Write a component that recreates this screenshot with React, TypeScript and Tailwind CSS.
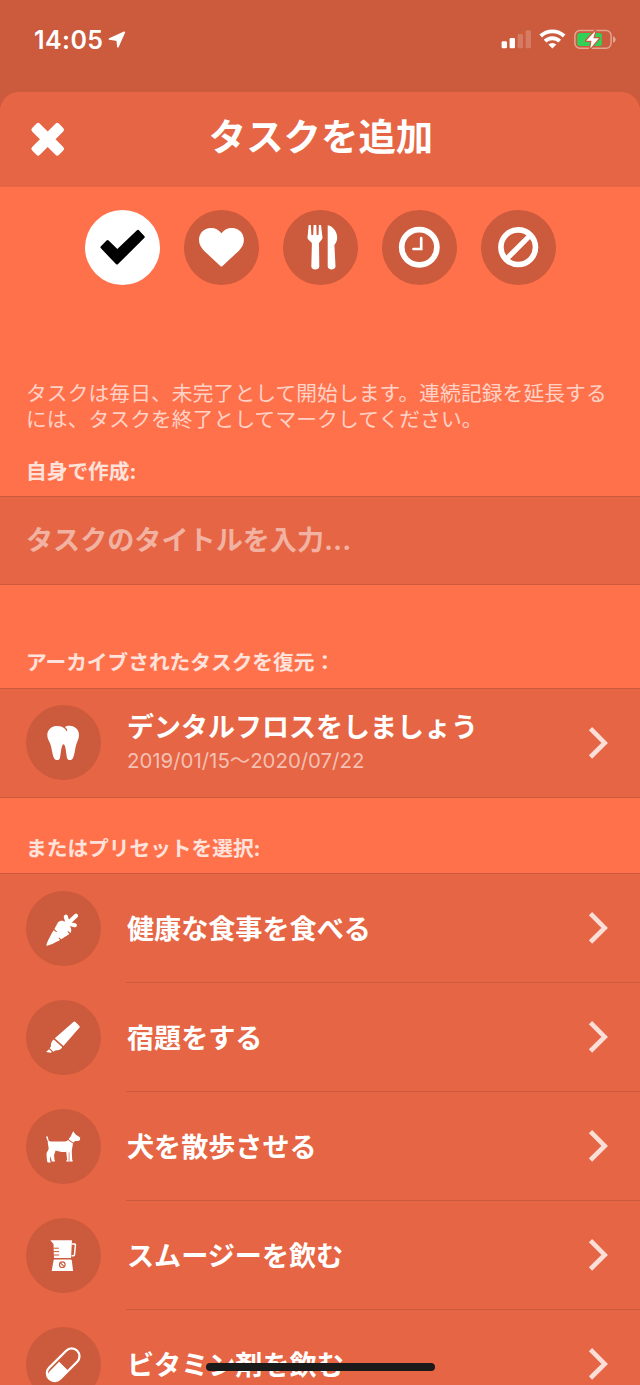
import React from 'react';

type IconProps = {
  children: React.ReactNode;
};

type Preset = {
  title: string;
  icon: React.ReactNode;
};

const Glyph = ({ children }: IconProps) => (
  <svg viewBox="0 0 75 75" className="h-[75px] w-[75px]" fill="currentColor">
    {children}
  </svg>
);

const CheckIcon = () => (
  <Glyph>
    <path
      d="M17 37.3 22.6 31.6 32.3 41 53 21.4 58.2 27 32 53Z"
      stroke="currentColor"
      strokeWidth="3"
      strokeLinejoin="round"
    />
  </Glyph>
);

const HeartIcon = () => (
  <Glyph>
    <path d="M37.4 23.2C34.5 19.6 31 17.7 26.8 17.9 19.8 18.2 15 23.3 15 29.8c0 4.600 1.900 7.800 5.200 11.100L36.300 55.900c.7.700 1.500.7 2.200 0l16.200-15c3.300-3.300 5.200-6.500 5.200-11.100 0-6.500-4.800-11.600-11.800-11.900-4.200-.2-7.800 1.700-10.700 5.300Z" />
  </Glyph>
);

const MealIcon = () => (
  <Glyph>
    <path d="M25.700 15h2.100l.6 10h1.800l.4-10h2.700l.4 10h1.800l.4-10h2.100l1.500 12.600c.2 2.300-3.300 4.100-3.500 5.900l.3 22.700c0 4.300-8 4.300-8 0l.6-22.700c-.4-1.800-4.700-3.600-4.400-5.900Z" />
    <path d="M44.700 15.200c5.100.6 9.500 6.600 9.500 12.400 0 3-.9 5-2.800 7.400l1.100 21.200c.1 4.300-7.900 4.300-7.800 0Z" />
  </Glyph>
);

const ClockIcon = () => (
  <Glyph>
    <circle cx="37.300" cy="37.200" r="17.600" fill="none" stroke="currentColor" strokeWidth="5.700" />
    <path d="M39.200 28.200V39H31.500" fill="none" stroke="currentColor" strokeWidth="2.700" strokeLinecap="round" />
  </Glyph>
);

const BanIcon = () => (
  <Glyph>
    <circle cx="37.200" cy="37.200" r="17.300" fill="none" stroke="currentColor" strokeWidth="5.600" />
    <path d="M26 48.500 48.500 26" stroke="currentColor" strokeWidth="5.300" />
  </Glyph>
);

const ToothIcon = () => (
  <Glyph>
    <path d="M30 21C33 20.600 36 21.400 38.300 23.200 39.300 24 39.900 25 40.300 26.200L41.200 25.800C41.200 24 40.200 22.700 38.700 22 40.500 20.900 42.800 20.600 45 20.900 50 21.500 53 25.300 53 30.200 53 34.500 50.600 37 49.700 41.500 48.900 45.500 48.300 51 46.600 53.700 45.400 55.500 41.900 55.600 41.100 53.200 40.100 49.800 39.900 39.300 37.500 39.300S34.900 49.800 33.900 53.200C33.100 55.600 29.600 55.500 28.300 53.700 26.600 51 26 45.500 25.100 41.500 24.100 37 21.300 34.500 21.300 30 21.300 25.200 24.900 21.500 30 21Z" />
  </Glyph>
);

const CarrotIcon = () => (
  <Glyph>
    <path d="M20.400 54.500C19.800 53.800 24.600 43.800 27.600 39.200L30.600 41.300 31.100 40.700 28.400 38 32 31.300C33.900 29 37.600 29.200 39.700 31.100L43.300 34.500C45.500 36.700 45.800 39.600 44.600 42L42 40.100 41.500 40.700 43.400 43.100 35.200 48.300 33.100 46.500 32.500 47.100 34 49.100C29.500 51.700 21.200 55.500 20.400 54.500Z" />
    <path
      d="m41.800 32.300-2-6.600M42 32.300l8-7.600M42.200 32.500l6.600 1.700"
      stroke="currentColor"
      strokeWidth="4.200"
      strokeLinecap="round"
    />
  </Glyph>
);

const MarkerIcon = () => (
  <Glyph>
    <path d="M28.800 38.200 47.700 21.800q.8-.6 1.500 0l4.200 4.200q.7.800.1 1.600L37.400 46.100Z" />
    <path d="m27.700 39.400 8.400 7.700c-1 2.800-3.500 3.300-6.700 3.300l-2 1.300-3.700-3.500 1.300-1.900c-.4-2.900.7-5.500 2.700-6.900Z" />
    <path d="m23 49.300 3.100 2.800-1.400.7-4.600-.8Z" />
  </Glyph>
);

const DogIcon = () => (
  <Glyph>
    <path d="M20.300 27.400c.8-.4 1.400-.1 1.600.8.5 2.200.4 4.200 2.900 4.200h14.300c1.500 0 2.300-.5 2.900-1.300l5 3.300c-.5 3.700-1.200 5.300-1.200 8.700l.4 8c.5.300.7.800.5 1.400h-6.400c-.2-.8.300-1.300.9-1.500l-1-8.200c-4 .8-7.500-.6-10.700-1.300-.4 3-1.600 3.500-1.400 5.300l.4 4.300c.5.300.6.800.4 1.300h-3.100l-1.500-5.400-.4 4.500c.6.500 1 1.300.7 1.900h-2.800l-.8-1.500-.5-6.500c0-3 2.500-3.900 2.100-6.700-.4-2.500-1-4.300-.8-6.700-.9-1.200-1.500-3.300-1.500-4.600Z" />
    <path d="M42.600 30.300c2-2.500 2.800-3.500 3.300-5.500l1.300-2.600 2.400 3.400 4.600 2.900-.3 2.500c-1.100 1.300-3.100.8-4.900 1.100l-1.600 1.600Z" />
    <path d="M43.100 43.500v8.700" stroke="#CC5A3C" strokeWidth=".7" />
  </Glyph>
);

const BlenderIcon = () => (
  <Glyph>
    <path d="M24.300 22.200H46L45 40H28l-.5-14Z" />
    <path d="M45.600 26h3q.9 0 .8 1l-.9 9.800q-.1.900-1 .9h-2" fill="none" stroke="currentColor" strokeWidth="1.500" />
    <path d="M27.500 30.200h5.400M27.700 33.600h5.400M27.900 37h5.400" stroke="#CC5A3C" strokeWidth="1" />
    <path d="M28.600 41.600h16.200q.9 0 1 .9l1.300 10.600H25.700L27.500 42.500q.2-.9 1.100-.9Z" />
    <circle cx="36.300" cy="46.700" r="2.800" fill="none" stroke="#CC5A3C" strokeWidth="1.200" />
    <path d="m34.400 44.800 3.800 3.800" stroke="#CC5A3C" strokeWidth="1.100" />
  </Glyph>
);

const PillIcon = () => (
  <Glyph>
    <g transform="rotate(-45 37.200 37.700)">
      <rect x="17.400" y="29.900" width="39.600" height="15.600" rx="7.800" fill="none" stroke="currentColor" strokeWidth="2.300" />
      <path d="M36.500 32.700V45.200H25.200a7.500 7.500 0 0 1-7.500-7.500q0-5 5.400-5Z" />
    </g>
  </Glyph>
);

const Chevron = () => (
  <svg viewBox="0 0 24 36" className="mr-[31px] h-9 w-6 shrink-0" fill="none">
    <path d="M5.500 3.700 19.700 17.900 5.500 32" stroke="#FADFD9" strokeWidth="4.600" />
  </svg>
);

const categories: React.ReactNode[] = [
  <CheckIcon />,
  <HeartIcon />,
  <MealIcon />,
  <ClockIcon />,
  <BanIcon />,
];

const presets: Preset[] = [
  { title: '健康な食事を食べる', icon: <CarrotIcon /> },
  { title: '宿題をする', icon: <MarkerIcon /> },
  { title: '犬を散歩させる', icon: <DogIcon /> },
  { title: 'スムージーを飲む', icon: <BlenderIcon /> },
  { title: 'ビタミン剤を飲む', icon: <PillIcon /> },
];

const StatusBar = () => (
  <div className="flex h-[92px] items-start justify-between pl-[34px] pr-[24px] pt-[24px]">
    <div className="flex h-8 items-center gap-[5px]">
      <span className="text-[25px] font-semibold leading-8 tracking-[0.4px]">14:05</span>
      <svg viewBox="0 0 18 18" className="h-[18px] w-[18px]" fill="currentColor">
        <path
          d="M1.500 8 16.300 1.300 9.900 15.700 9.300 9.100Z"
          stroke="currentColor"
          strokeWidth="1.700"
          strokeLinejoin="round"
        />
      </svg>
    </div>
    <svg viewBox="0 0 116 32" className="h-8 w-[116px]" fill="currentColor">
      <rect x="1.600" y="17.300" width="5.400" height="7" rx="1.300" />
      <rect x="9.600" y="14" width="5.400" height="10.300" rx="1.300" />
      <rect x="17.600" y="10" width="5.400" height="14.300" rx="1.300" opacity=".2" />
      <rect x="25.600" y="6.200" width="5.400" height="18.100" rx="1.300" opacity=".2" />
      <g fill="none" stroke="currentColor" strokeWidth="3.900">
        <path d="M40.700 12a17 17 0 0 1 23.400 0" />
        <path d="M45.100 17.200a10.500 10.500 0 0 1 14.600 0" />
      </g>
      <path d="M48.400 20.500a6 6 0 0 1 8 0l-4 4Z" />
      <rect x="74.900" y="6.500" width="36.200" height="17.800" rx="5" fill="none" stroke="currentColor" strokeWidth="1.500" opacity=".45" />
      <rect x="77.200" y="8.900" width="24.700" height="13" rx="2.500" fill="#31D158" />
      <path d="M113 12.200q2.700.7 2.700 3.200t-2.700 3.200Z" opacity=".45" />
      <path
        d="M95.300 7 86.200 16.700h5.300L90.300 24.500 98.900 14.200h-5.600Z"
        stroke="#CC5A3C"
        strokeWidth="2.600"
        strokeLinejoin="round"
        paintOrder="stroke"
      />
    </svg>
  </div>
);

const App = () => {
  return (
    <div className="relative h-[1385px] w-[640px] overflow-hidden bg-[#CC5A3C] font-['Inter','Noto_Sans_CJK_JP',sans-serif] text-white">
      <StatusBar />

      <div className="overflow-hidden rounded-t-[20px] bg-[#FF714B]">
        <header className="grid h-[95px] grid-cols-[96px_1fr_96px] bg-[#E66544]">
          <svg viewBox="0 0 96 95" className="h-[95px] w-24">
            <g fill="currentColor" transform="rotate(45 47.700 47.200)">
              <rect x="28.700" y="41.700" width="38" height="11" rx="2.500" />
              <rect x="42.200" y="28.200" width="11" height="38" rx="2.500" />
            </g>
          </svg>
          <h1 className="pl-[2px] pt-[21px] text-center text-[37.400px] font-bold leading-[50px]">
            タスクを追加
          </h1>
        </header>

        <div className="flex h-[121px] justify-center gap-6 pt-[23px]">
          {categories.map((icon, index) => (
            <button
              key={index}
              className={
                index === 0
                  ? 'h-[75px] w-[75px] rounded-full bg-white text-black'
                  : 'h-[75px] w-[75px] rounded-full bg-[#CC5A3C] text-white'
              }
            >
              {icon}
            </button>
          ))}
        </div>

        <p className="h-[137px] whitespace-nowrap pl-[26px] pt-[73px] text-[20.700px] leading-[26px] tracking-[0.150px] text-white/70">
          タスクは毎日、未完了として開始します。連続記録を延長する
          <br />
          には、タスクを終了としてマークしてください。
        </p>

        <h2 className="h-[51px] pl-[26px] pt-[14px] text-[20.700px] font-bold leading-[26px] text-white/80">
          自身で作成:
        </h2>
        <div className="flex h-[89px] items-center border-y border-[#CC5A3C] bg-[#E66544] pl-[26px] text-[27.100px] font-bold leading-9 text-white/50">
          タスクのタイトルを入力...
        </div>

        <h2 className="h-[103px] pl-[26px] pt-[65px] text-[20.700px] font-bold leading-[26px] text-white/80">
          アーカイブされたタスクを復元：
        </h2>
        <div className="flex h-[110px] items-center border-y border-[#CC5A3C] bg-[#E66544] pb-px pl-[26px]">
          <div className="h-[75px] w-[75px] shrink-0 rounded-full bg-[#CC5A3C]">
            <ToothIcon />
          </div>
          <div className="flex-1 pl-[26px] pt-px">
            <div className="text-[27px] font-bold leading-9">デンタルフロスをしましょう</div>
            <div className="text-[20.400px] leading-[30px] text-white/60">
              2019/01/15〜2020/07/22
            </div>
          </div>
          <Chevron />
        </div>

        <h2 className="h-[75px] pl-[26px] pt-[38px] text-[20.700px] font-bold leading-[26px] text-white/80">
          またはプリセットを選択:
        </h2>
        <div className="border-t border-[#CC5A3C] bg-[#E66544]">
          {presets.map((preset) => (
            <div key={preset.title} className="flex h-[109px] items-center pl-[26px]">
              <div className="h-[75px] w-[75px] shrink-0 rounded-full bg-[#CC5A3C]">
                {preset.icon}
              </div>
              <div className="ml-[25px] flex h-full flex-1 items-center justify-between border-b border-[#CC5A3C]">
                <span className="pl-px pt-[3px] text-[27.100px] font-bold leading-9">{preset.title}</span>
                <Chevron />
              </div>
            </div>
          ))}
        </div>
      </div>

      {/* home indicator */}
      <div className="absolute left-[206px] top-[1363px] h-2 w-[229px] rounded-full bg-[#1A1A1A]" />
    </div>
  );
};

export default App;
